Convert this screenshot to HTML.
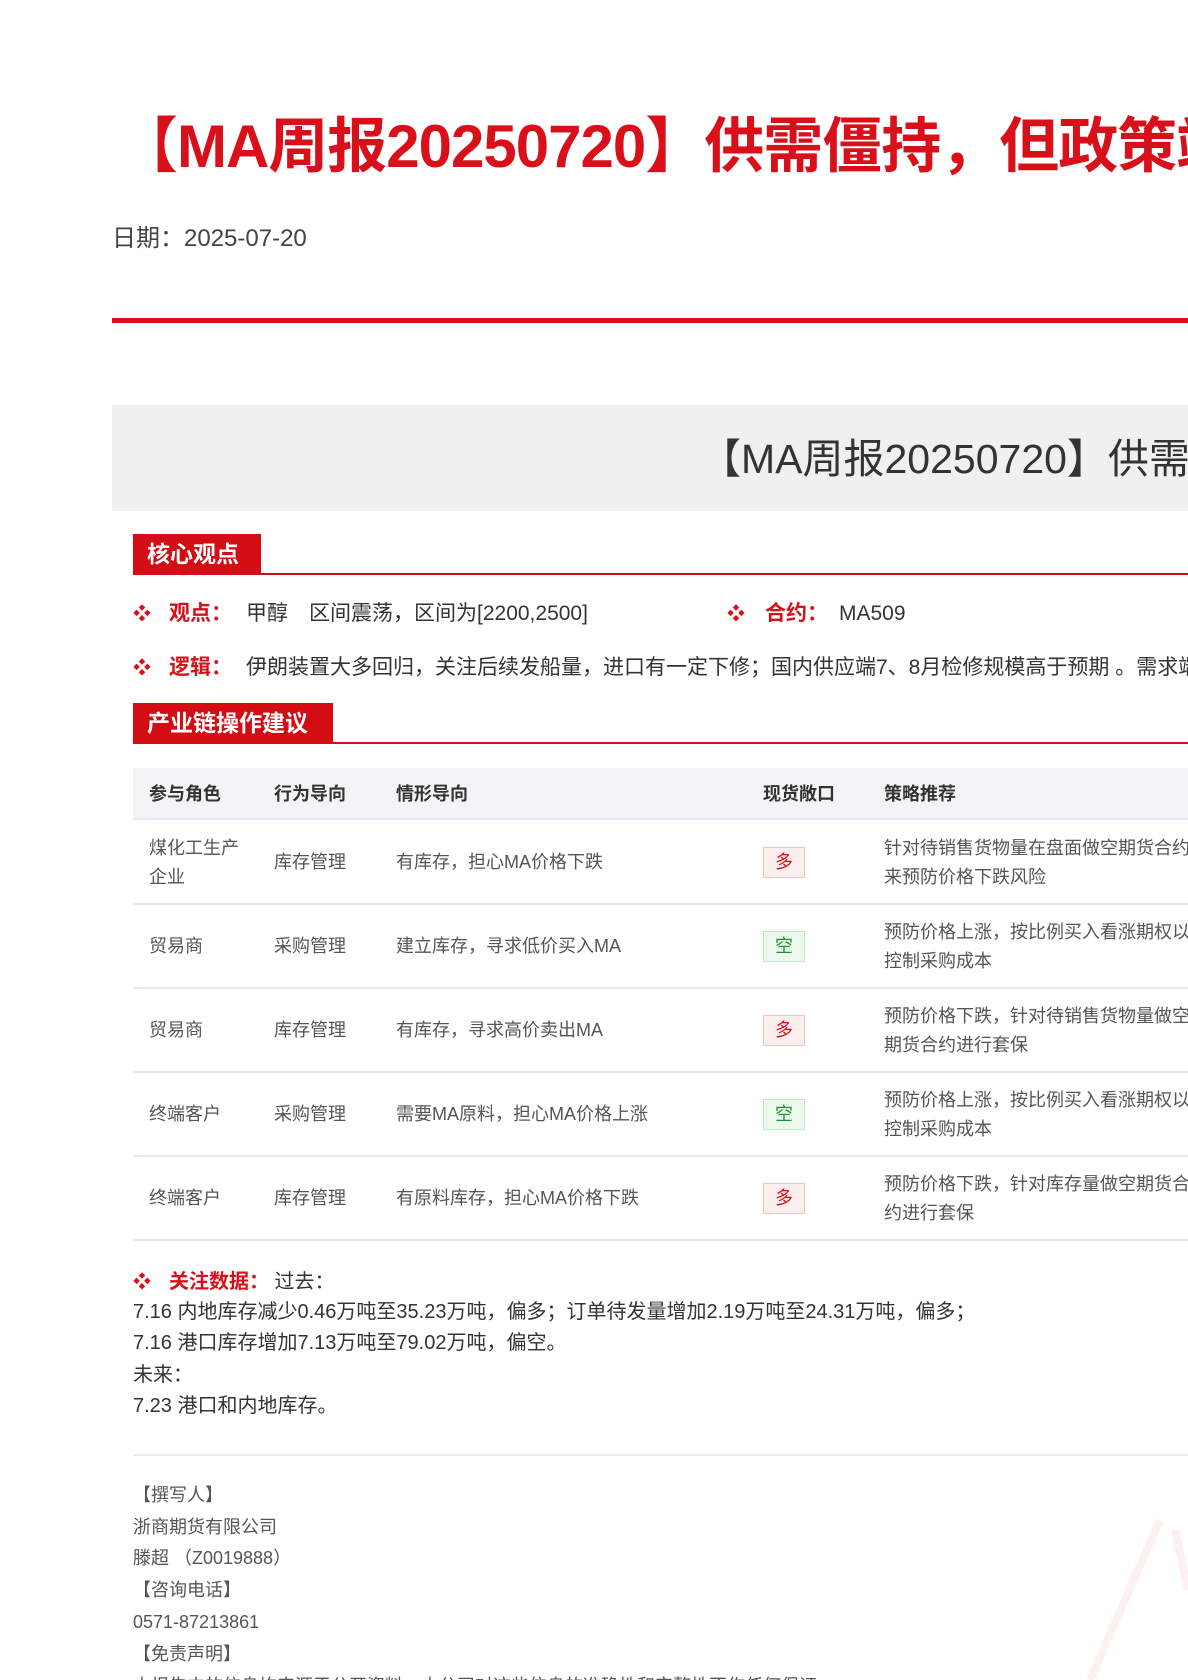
<!DOCTYPE html>
<html><head><meta charset="utf-8">
<style>
*{margin:0;padding:0;box-sizing:border-box}
html,body{width:1188px;height:1680px;overflow:hidden;background:#fff}
body{position:relative;font-family:"Liberation Sans","Noto Sans CJK SC",sans-serif;color:#333}
#w{position:absolute;left:0;top:0;width:1188px;height:1680px;overflow:hidden}
.a{position:absolute;white-space:nowrap}
.title{left:118px;top:112px;font-size:60px;font-weight:bold;color:#d9101a;letter-spacing:-1px;line-height:70px}
.date{left:112px;top:224px;font-size:24px;color:#444;line-height:30px}
.rl{left:112px;top:318px;width:1076px;height:5px;background:#d9101a}
.gbox{left:112px;top:405px;width:1076px;height:106px;background:#f0f0f0}
.gt{left:700px;top:434px;font-size:41px;color:#333;line-height:50px}
.hd{background:#d40c14;color:#fff;font-weight:bold;font-size:23px;line-height:40px;padding-left:14px;height:40px}
.hl{height:2px;background:#d40c14;left:133px;width:1055px}
.lab{color:#d9101a;font-weight:bold}
.bul{color:#d9101a;font-size:18px}
.r{font-size:21px;line-height:30px}
.th{left:133px;top:768px;width:1055px;height:52px;background:#f3f4f6;border-bottom:2px solid #e6e9ef}
.thx{top:782px;font-size:18px;font-weight:bold;color:#333;line-height:24px}
.bl{left:133px;width:1055px;height:2px;background:#e6e9ef}
.td{font-size:18px;color:#555;line-height:29px}
.bd{width:42px;height:31px;font-size:18px;line-height:29px;text-align:center}
.red{background:#fdeeee;border:1px solid #f6c4c4;color:#d9101a}
.grn{background:#ecf8ee;border:1px solid #c4e6cb;color:#1a9b32}
.b{font-size:20px;line-height:32px;color:#333}
.f{font-size:18px;line-height:32px;color:#555}
</style></head><body><div id="w">
<div class="a title">【MA周报20250720】供需僵持，但政策端扰动增加</div>
<div class="a date">日期：2025-07-20</div>
<div class="a rl"></div>
<div class="a gbox"></div>
<div class="a gt">【MA周报20250720】供需僵持，但政策端扰动增加</div>

<div class="a hd" style="left:133px;top:534px;width:128px">核心观点</div>
<div class="a hl" style="top:573px"></div>

<div class="a r" style="left:133px;top:599px"><span class="bul">❖</span></div>
<div class="a r" style="left:169px;top:599px"><span class="lab">观点：</span></div>
<div class="a r" style="left:246px;top:599px">甲醇　区间震荡，区间为[2200,2500]</div>
<div class="a r" style="left:727px;top:599px"><span class="bul">❖</span></div>
<div class="a r" style="left:765px;top:599px"><span class="lab">合约：</span></div>
<div class="a r" style="left:839px;top:599px">MA509</div>

<div class="a r" style="left:133px;top:653px"><span class="bul">❖</span></div>
<div class="a r" style="left:169px;top:653px"><span class="lab">逻辑：</span></div>
<div class="a r" style="left:246px;top:653px">伊朗装置大多回归，关注后续发船量，进口有一定下修；国内供应端7、8月检修规模高于预期 。需求端</div>

<div class="a hd" style="left:133px;top:703px;width:200px">产业链操作建议</div>
<div class="a hl" style="top:742px"></div>

<div class="a th"></div>
<div class="a thx" style="left:149px">参与角色</div>
<div class="a thx" style="left:274px">行为导向</div>
<div class="a thx" style="left:396px">情形导向</div>
<div class="a thx" style="left:763px">现货敞口</div>
<div class="a thx" style="left:884px">策略推荐</div>

<div class="a td" style="left:149px;top:834px;white-space:normal;width:100px">煤化工生产企业</div>
<div class="a td" style="left:274px;top:848px">库存管理</div>
<div class="a td" style="left:396px;top:848px">有库存，担心MA价格下跌</div>
<div class="a bd red" style="left:763px;top:847px">多</div>
<div class="a td" style="left:884px;top:834px">针对待销售货物量在盘面做空期货合约<br>来预防价格下跌风险</div>
<div class="a bl" style="top:903px"></div>

<div class="a td" style="left:149px;top:932px">贸易商</div>
<div class="a td" style="left:274px;top:932px">采购管理</div>
<div class="a td" style="left:396px;top:932px">建立库存，寻求低价买入MA</div>
<div class="a bd grn" style="left:763px;top:931px">空</div>
<div class="a td" style="left:884px;top:918px">预防价格上涨，按比例买入看涨期权以<br>控制采购成本</div>
<div class="a bl" style="top:987px"></div>

<div class="a td" style="left:149px;top:1016px">贸易商</div>
<div class="a td" style="left:274px;top:1016px">库存管理</div>
<div class="a td" style="left:396px;top:1016px">有库存，寻求高价卖出MA</div>
<div class="a bd red" style="left:763px;top:1015px">多</div>
<div class="a td" style="left:884px;top:1002px">预防价格下跌，针对待销售货物量做空<br>期货合约进行套保</div>
<div class="a bl" style="top:1071px"></div>

<div class="a td" style="left:149px;top:1100px">终端客户</div>
<div class="a td" style="left:274px;top:1100px">采购管理</div>
<div class="a td" style="left:396px;top:1100px">需要MA原料，担心MA价格上涨</div>
<div class="a bd grn" style="left:763px;top:1099px">空</div>
<div class="a td" style="left:884px;top:1086px">预防价格上涨，按比例买入看涨期权以<br>控制采购成本</div>
<div class="a bl" style="top:1155px"></div>

<div class="a td" style="left:149px;top:1184px">终端客户</div>
<div class="a td" style="left:274px;top:1184px">库存管理</div>
<div class="a td" style="left:396px;top:1184px">有原料库存，担心MA价格下跌</div>
<div class="a bd red" style="left:763px;top:1183px">多</div>
<div class="a td" style="left:884px;top:1170px">预防价格下跌，针对库存量做空期货合<br>约进行套保</div>
<div class="a bl" style="top:1239px"></div>

<div class="a b" style="left:133px;top:1266px"><span class="bul">❖</span></div>
<div class="a b" style="left:169px;top:1266px"><span class="lab">关注数据：</span> 过去：</div>
<div class="a b" style="left:133px;top:1296px">7.16 内地库存减少0.46万吨至35.23万吨，偏多；订单待发量增加2.19万吨至24.31万吨，偏多；</div>
<div class="a b" style="left:133px;top:1327px">7.16 港口库存增加7.13万吨至79.02万吨，偏空。</div>
<div class="a b" style="left:133px;top:1359px">未来：</div>
<div class="a b" style="left:133px;top:1390px">7.23 港口和内地库存。</div>
<div class="a" style="left:133px;top:1454px;width:1055px;height:2px;background:#ececec"></div>

<div class="a f" style="left:133px;top:1479px">【撰写人】</div>
<div class="a f" style="left:133px;top:1511px">浙商期货有限公司</div>
<div class="a f" style="left:133px;top:1542px">滕超 （Z0019888）</div>
<div class="a f" style="left:133px;top:1574px">【咨询电话】</div>
<div class="a f" style="left:133px;top:1606px">0571-87213861</div>
<div class="a f" style="left:133px;top:1638px">【免责声明】</div>
<div class="a f" style="left:133px;top:1670px">本报告中的信息均来源于公开资料，本公司对这些信息的准确性和完整性不作任何保证</div>
<svg class="a" style="left:1000px;top:1500px" width="188" height="180"><path d="M160 20 L90 180 M175 30 L188 90" stroke="#fdf0f0" stroke-width="8" fill="none"/></svg>
</div></body></html>
